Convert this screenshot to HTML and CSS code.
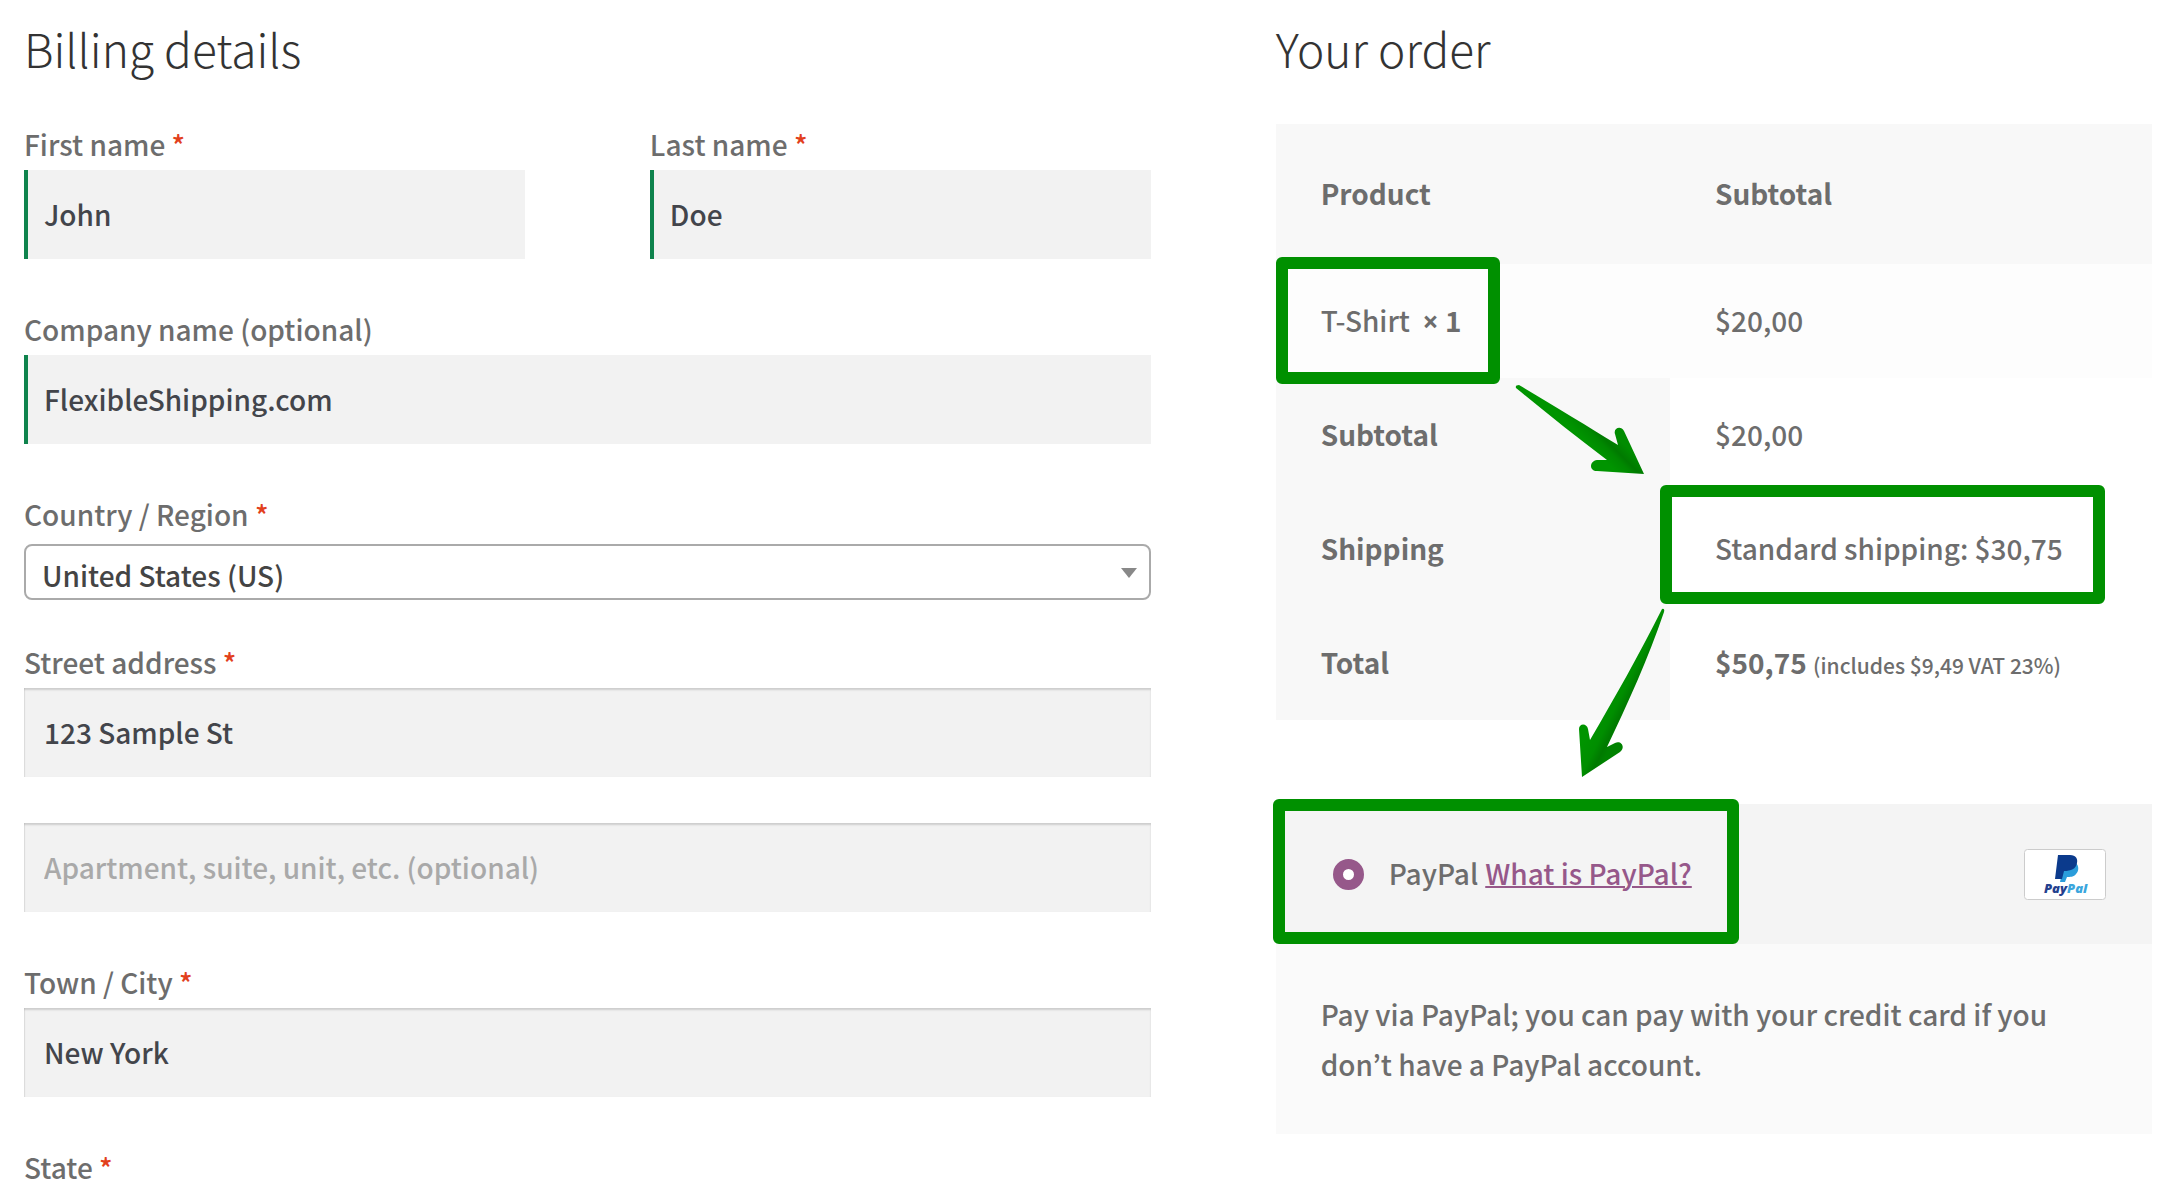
FILE: index.html
```html
<!DOCTYPE html>
<html lang="en">

<head>
  <meta charset="UTF-8" />
  <meta name="viewport" content="width=device-width, initial-scale=1" />
  <title>Checkout</title>
  <link rel="stylesheet" href="styles.css">
</head>

<body>
  <form class="checkout">
    <section class="billing">
      <h2>Billing details</h2>

      <div class="field-row">
        <div class="field">
          <label for="first-name">First name <abbr class="required">*</abbr></label>
          <input class="valid" type="text" id="first-name" value="John">
        </div>
        <div class="field">
          <label for="last-name">Last name <abbr class="required">*</abbr></label>
          <input class="valid" type="text" id="last-name" value="Doe">
        </div>
      </div>

      <div class="field">
        <label for="company">Company name (optional)</label>
        <input class="valid" type="text" id="company" value="FlexibleShipping.com">
      </div>

      <div class="field field-select">
        <label for="country">Country / Region <abbr class="required">*</abbr></label>
        <div class="select-wrap">
          <select id="country">
            <option>United States (US)</option>
          </select>
        </div>
      </div>

      <div class="field">
        <label for="street">Street address <abbr class="required">*</abbr></label>
        <input type="text" id="street" value="123 Sample St">
      </div>

      <div class="field">
        <input type="text" id="street-2" aria-label="Apartment" placeholder="Apartment, suite, unit, etc. (optional)">
      </div>

      <div class="field">
        <label for="city">Town / City <abbr class="required">*</abbr></label>
        <input type="text" id="city" value="New York">
      </div>

      <div class="field">
        <span class="label">State <abbr class="required">*</abbr></span>
      </div>
    </section>

    <section class="order">
      <h2>Your order</h2>

      <table class="order-table">
        <thead>
          <tr>
            <th>Product</th>
            <th>Subtotal</th>
          </tr>
        </thead>
        <tbody>
          <tr>
            <td>T-Shirt&nbsp; <strong><span class="times">×</span>&nbsp;1</strong><span class="mark mark-product"></span></td>
            <td>$20,00</td>
          </tr>
        </tbody>
        <tfoot>
          <tr>
            <th>Subtotal
              <svg class="arrow arrow-shipping" width="132" height="94" viewBox="0 0 132 94" aria-hidden="true">
                <defs>
                  <linearGradient id="shade-1" gradientUnits="userSpaceOnUse" x1="86" y1="72" x2="104" y2="54">
                    <stop offset="0" stop-color="#009400" />
                    <stop offset="0.4" stop-color="#008800" />
                    <stop offset="0.6" stop-color="#007a00" />
                    <stop offset="1" stop-color="#008c00" />
                  </linearGradient>
                </defs>
                <path fill="url(#shade-1)" d="M4 0 Q0 0 1 3 C30 27 60 51 92 75 L82 75 C74 76 74 86 82 86 L129 89 L109 46 C106 40 98 43 100 49 L103 60 C72 41 38 20 4 0Z" />
              </svg>
            </th>
            <td>$20,00</td>
          </tr>
          <tr>
            <th>Shipping</th>
            <td>Standard shipping: $30,75<span class="mark mark-shipping"></span></td>
          </tr>
          <tr>
            <th>Total
              <svg class="arrow arrow-payment" width="90" height="174" viewBox="0 0 90 174" aria-hidden="true">
                <defs>
                  <linearGradient id="shade-2" gradientUnits="userSpaceOnUse" x1="10" y1="130" x2="34" y2="142">
                    <stop offset="0" stop-color="#009400" />
                    <stop offset="0.5" stop-color="#008e00" />
                    <stop offset="0.8" stop-color="#007a00" />
                    <stop offset="1" stop-color="#008200" />
                  </linearGradient>
                </defs>
                <path fill="url(#shade-2)" d="M85 5 Q88 4 87 8 C71 55 51 99 30 143 L38 139 C44 136 49 143 43 148 L5 173 L2 125 C2 119 10 119 11 125 L13 136 C38 93 62 51 85 5Z" />
              </svg>
            </th>
            <td><strong>$50,75</strong> <small>(includes $9,49 VAT 23%)</small></td>
          </tr>
        </tfoot>
      </table>

      <div class="payment">
        <div class="payment-method">
          <input type="radio" name="payment" id="paypal" checked>
          <label for="paypal">PayPal</label>
          <a href="#">What is PayPal?</a>
          <svg class="paypal-logo" width="82" height="51" viewBox="0 0 82 51" role="img" aria-label="PayPal">
            <rect x="0.5" y="0.5" width="81" height="50" rx="3" fill="#fff" stroke="#ccc" />
            <path fill="#2a9ddb" d="M40 14 H52 C55 17 55 22 52 25 C50 28 46 28 43 28 L41 33 H36 Z" />
            <path fill="#0b3a8c" d="M34 6 H46 C52 6 54 10 53 14 C52 20 47 22 40 22 L38 30 H31 Z" />
            <text x="20" y="44" class="logo-text"><tspan fill="#24408e">Pay</tspan><tspan fill="#3aa6dd">Pal</tspan></text>
          </svg>
          <span class="mark mark-payment"></span>
        </div>
        <p class="payment-info">Pay via PayPal; you can pay with your credit card if you don’t have a PayPal account.</p>
      </div>
    </section>
  </form>
</body>

</html>
```
FILE: styles.css
```css
* {
  box-sizing: border-box;
}

body {
  margin: 0;
  background: #fff;
  color: #6d6d6d;
  font-family: "Noto Sans CJK KR", "Noto Sans", sans-serif;
  font-size: 28px;
  font-weight: 500;
  line-height: 50px;
}

.checkout {
  display: grid;
  grid-template-columns: 9fr 7fr;
  column-gap: 125px;
  align-items: start;
  padding: 16px 30px 0 24px;
}

h2 {
  margin: 0 0 40px;
  color: #333;
  font-size: 46px;
  font-weight: 300;
  line-height: 64px;
}

/* billing form */
.field-row {
  display: grid;
  grid-template-columns: 1fr 1fr;
  column-gap: 125px;
}

.field {
  margin-bottom: 46px;
}

.billing .field:last-child {
  margin-bottom: 0;
}

.field label,
.field .label {
  display: block;
  padding-bottom: 2px;
  line-height: 48px;
}

.required {
  color: #e2401c;
  text-decoration: none;
}

.field input {
  display: block;
  width: 100%;
  height: 89px;
  padding: 0 20px 2px;
  border: 0;
  border-radius: 0;
  background: #f2f2f2;
  box-shadow: inset 0 2px 2px rgba(0, 0, 0, 0.15), inset 1px 0 1px rgba(0, 0, 0, 0.06);
  color: #43454b;
  font: inherit;
}

.field input.valid {
  box-shadow: inset 4px 0 0 #0f834d;
}

.field input::placeholder {
  color: #a9a9a9;
  opacity: 1;
}

.field-select {
  margin-bottom: 38px;
}

.select-wrap {
  position: relative;
  padding-top: 4px;
}

.select-wrap::after {
  content: "";
  position: absolute;
  top: 28px;
  right: 14px;
  border: 8px solid transparent;
  border-top: 10px solid #888;
  border-bottom: 0;
  pointer-events: none;
}

.field select {
  display: block;
  width: 100%;
  height: 56px;
  padding: 4px 40px 0 16px;
  border: 2px solid #aaa;
  border-radius: 8px;
  background: #fff;
  color: #444;
  font: inherit;
  appearance: none;
}

/* order summary */
.order h2 {
  margin-bottom: 44px;
}

.order-table {
  width: 100%;
  margin-bottom: 84px;
  border-collapse: collapse;
  table-layout: fixed;
}

.order-table th,
.order-table td {
  position: relative;
  padding: 31px 45px 33px;
  text-align: left;
  white-space: nowrap;
}

.order-table th {
  background: #f8f8f8;
  font-weight: 700;
}

.order-table th:first-child {
  width: 45%;
}

.order-table thead th {
  padding: 44px 45px 46px;
}

.order-table tbody td {
  background: #fdfdfd;
}

.order-table small {
  font-size: 21px;
  line-height: 1;
}

.times {
  font-family: "Open Sans", sans-serif;
  line-height: 1;
}

/* payment */
.payment {
  background: #fafafa;
}

.payment-method {
  position: relative;
  display: flex;
  align-items: center;
  gap: 7px;
  height: 140px;
  padding: 0 46px 0 57px;
  background: #f4f4f4;
}

.payment-method input {
  width: 31px;
  height: 31px;
  margin: 0 18px 0 0;
  border: 10px solid #96588a;
  border-radius: 50%;
  background: #fff;
  appearance: none;
}

.payment-method label,
.payment-method a {
  padding-bottom: 2px;
}

.payment-method a {
  color: #96588a;
  text-decoration: underline;
  text-decoration-thickness: 2px;
}

.paypal-logo {
  margin-left: auto;
}

.logo-text {
  font-family: "Open Sans", sans-serif;
  font-size: 13px;
  font-style: italic;
  font-weight: 800;
}

.payment-info {
  margin: 0;
  padding: 45px;
}

/* green highlights and arrows */
.mark {
  position: absolute;
  z-index: 1;
  border: 12px solid #009000;
  border-radius: 6px;
  pointer-events: none;
}

.mark-product {
  top: -7px;
  left: 0;
  width: 224px;
  height: 127px;
}

.mark-shipping {
  top: -7px;
  right: 47px;
  bottom: 2px;
  left: -10px;
}

.mark-payment {
  top: -5px;
  bottom: 0;
  left: -3px;
  width: 466px;
}

.arrow {
  position: absolute;
  z-index: 1;
}

.arrow-shipping {
  top: 7px;
  right: 23px;
}

.arrow-payment {
  top: -2px;
  right: 3px;
}
```
